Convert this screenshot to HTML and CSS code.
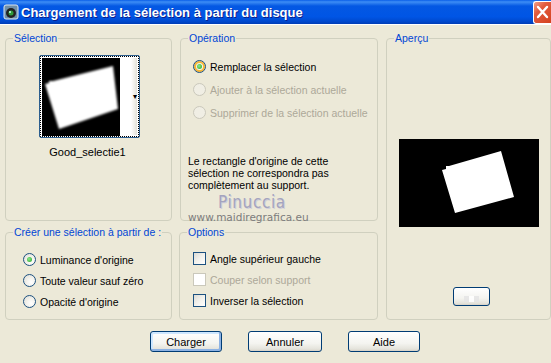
FILE: index.html
```html
<!DOCTYPE html>
<html>
<head>
<meta charset="UTF-8">
<title>Chargement de la sélection à partir du disque</title>
<link rel="stylesheet" href="styles.css">
</head>
<body>
<div class="fenetre">
	<div class="titre">
		<span class="icone">
			<svg width="16" height="16" viewBox="0 0 16 16">
				<rect x="1" y="1" width="14" height="14" rx="2" fill="#6f8fa8" stroke="#dfe8ef"/>
				<circle cx="8" cy="9" r="5" fill="#222"/>
				<circle cx="8" cy="9" r="2.5" fill="#2f9a3a"/>
				<circle cx="7" cy="8" r="1" fill="#cfe"/>
			</svg>
		</span>
		<span class="texte-titre">Chargement de la sélection à partir du disque</span>
		<span class="fermer">
			<svg width="17" height="21" viewBox="0 0 17 21">
				<path d="M4 5 L13 15 M13 5 L4 15" stroke="#fff" stroke-width="2.4" stroke-linecap="round"/>
			</svg>
		</span>
	</div>

	<div class="contenu">
		<fieldset class="groupe selection">
			<legend>Sélection</legend>
			<div class="vignette">
				<div class="vignette-image">
					<svg width="78" height="78" viewBox="0 0 78 78">
						<defs><filter id="flou"><feGaussianBlur stdDeviation="0.9"/></filter></defs>
						<rect width="78" height="78" fill="#000"/>
						<polygon points="3,26 7,25 7,23 11,23 71,8 76,51 17,71" fill="#fff" filter="url(#flou)"/>
					</svg>
				</div>
				<div class="vignette-fleche">&#9662;</div>
			</div>
			<div class="nom-fichier">Good_selectie1</div>
		</fieldset>

		<fieldset class="groupe operation">
			<legend>Opération</legend>
			<label class="choix"><span class="radio coche survol"></span>Remplacer la sélection</label>
			<label class="choix inactif"><span class="radio"></span>Ajouter à la sélection actuelle</label>
			<label class="choix inactif"><span class="radio"></span>Supprimer de la sélection actuelle</label>
			<p class="remarque">Le rectangle d'origine de cette sélection ne correspondra pas complètement au support.</p>
		</fieldset>

		<fieldset class="groupe apercu">
			<legend>Aperçu</legend>
			<div class="apercu-image">
				<svg width="140" height="88" viewBox="0 0 140 88">
					<defs><filter id="flou2"><feGaussianBlur stdDeviation="0.6"/></filter></defs>
					<rect width="140" height="88" fill="#000"/>
					<polygon points="43,31 47,30 47,27 50,27 102,12 115,58 56,74" fill="#fff" filter="url(#flou2)"/>
				</svg>
			</div>
			<button class="bouton petit"><span class="damier"></span></button>
		</fieldset>

		<fieldset class="groupe creer">
			<legend>Créer une sélection à partir de :</legend>
			<label class="choix"><span class="radio coche"></span>Luminance d'origine</label>
			<label class="choix"><span class="radio"></span>Toute valeur sauf zéro</label>
			<label class="choix"><span class="radio"></span>Opacité d'origine</label>
		</fieldset>

		<fieldset class="groupe options">
			<legend>Options</legend>
			<label class="choix"><span class="case"></span>Angle supérieur gauche</label>
			<label class="choix inactif"><span class="case"></span>Couper selon support</label>
			<label class="choix"><span class="case"></span>Inverser la sélection</label>
		</fieldset>

		<div class="filigrane">
			<div class="filigrane-nom">Pinuccia</div>
			<div class="filigrane-site">www.maidiregrafica.eu</div>
		</div>
	</div>

	<div class="boutons">
		<button class="bouton defaut">Charger</button>
		<button class="bouton">Annuler</button>
		<button class="bouton">Aide</button>
	</div>
</div>
</body>
</html>
```

FILE: styles.css
```css
body{
	margin:0;
	background-color:#ECE9D8;
	font-family:"Liberation Sans", Arial, sans-serif;
	font-size:10.5px;
	color:#000;
}
.fenetre{
	width:551px;
	height:363px;
	overflow:hidden;
	position:relative;
}

/* barre de titre facon XP */
.titre{
	height:25px;
	display:flex;
	align-items:center;
	background:linear-gradient(#0A5FE8 0%, #3D8DF5 8%, #0458E3 25%, #0055E5 70%, #0048CC 90%, #003DB5 100%);
	border-bottom:1px solid #fff;
	box-sizing:border-box;
	color:#fff;
}
.icone{
	width:16px;
	height:16px;
	margin-left:3px;
	margin-right:2px;
	display:flex;
}
.texte-titre{
	font-weight:bold;
	font-size:13px;
	text-shadow:1px 1px #0A1E8C;
	flex:1;
}
.fermer{
	width:17px;
	height:21px;
	background:linear-gradient(135deg, #F0A08A 0%, #E25B3E 35%, #D4421F 100%);
	border:1px solid #fff;
	border-right:none;
	border-radius:3px 0 0 3px;
	display:flex;
}

/* zone principale */
.contenu{
	position:relative;
	display:grid;
	grid-template-columns:167px 198px 165px;
	grid-template-rows:189px 94px;
	column-gap:8px;
	row-gap:5px;
	padding:7px 0 0 5px;
}
.groupe{
	margin:0;
	border:1px solid #D0D0BF;
	border-radius:4px;
	padding:0;
	min-width:0;
	position:relative;
}
.groupe legend{
	color:#0046D5;
	padding:0 1px;
	margin-left:7px;
	line-height:13px;
}
.selection{ grid-column:1; grid-row:1; }
.operation{ grid-column:2; grid-row:1; }
.apercu{ grid-column:3; grid-row:1 / span 2; }
.creer{ grid-column:1; grid-row:2; }
.options{ grid-column:2; grid-row:2; margin-left:-1px; }

/* vignette de selection */
.vignette{
	width:101px;
	height:83px;
	margin:10px 0 0 33px;
	border:1px solid #2C5E8E;
	border-radius:2px;
	box-sizing:border-box;
	padding:2px;
	display:flex;
	background:#fff;
	outline:1px dotted #000;
	outline-offset:-2px;
}
.vignette-image{
	width:78px;
	height:78px;
	display:flex;
}
.vignette-fleche{
	width:17px;
	background:linear-gradient(90deg, #fff 0%, #fff 65%, #E4E2D8 100%);
	font-size:8px;
	line-height:8px;
	text-align:right;
	padding-top:35px;
	box-sizing:border-box;
}
.nom-fichier{
	text-align:center;
	margin-top:8px;
	padding-right:2px;
	font-size:11px;
}

/* boutons radio et cases */
.choix{
	display:flex;
	align-items:center;
	height:13px;
	gap:4px;
}
.operation .choix{ margin-left:12px; margin-bottom:10px; }
.operation .choix:first-of-type{ margin-top:15px; }
.creer .choix{ margin-left:17px; margin-bottom:8px; }
.creer .choix:first-of-type{ margin-top:14px; }
.options .choix{ margin-left:13px; margin-bottom:8px; }
.options .choix:first-of-type{ margin-top:13px; }

.inactif{ color:#ACA899; }
.radio{
	width:13px;
	height:13px;
	border-radius:50%;
	border:1px solid #1C5180;
	box-sizing:border-box;
	background:radial-gradient(circle at 65% 65%, #fff 0%, #F4F3EE 40%, #DCDBD2 100%);
	display:inline-block;
	position:relative;
	flex:none;
}
.radio.coche::after{
	content:"";
	position:absolute;
	left:3px;
	top:3px;
	width:5px;
	height:5px;
	border-radius:50%;
	background:radial-gradient(circle at 40% 40%, #8CEB8C, #21A121);
}
.radio.survol{
	box-shadow:inset 0 0 0 2px #F8B636;
}
.inactif .radio{
	border-color:#CAC8BB;
	background:#F0EEE4;
}
.case{
	width:13px;
	height:13px;
	border:1px solid #1C5180;
	box-sizing:border-box;
	background:linear-gradient(135deg, #DCDBD5 0%, #F2F1EC 50%, #fff 100%);
	display:inline-block;
	flex:none;
}
.inactif .case{
	border-color:#CAC8BB;
	background:#fff;
}

.remarque{
	margin:36px 0 0 7px;
	line-height:12px;
	width:170px;
}

/* apercu */
.apercu-image{
	width:140px;
	height:88px;
	margin:94px 0 0 12px;
	display:flex;
}
.bouton{
	font-family:"Liberation Sans", Arial, sans-serif;
	font-size:11px;
	color:#000;
	border:1px solid #003C74;
	border-radius:3px;
	background:linear-gradient(#FFFFFF 0%, #F4F4F0 60%, #E4E3DB 90%, #D6D0C5 100%);
	padding:0;
	height:21px;
}
.bouton.petit{
	display:block;
	width:37px;
	height:19px;
	margin:60px 0 0 66px;
	position:relative;
}
.damier{
	display:block;
	width:15px;
	height:6px;
	margin:4px auto 0;
	background:
		linear-gradient(90deg, transparent 0 5px, #fff 5px 10px, transparent 10px),
		linear-gradient(90deg, #E6E6E6 0 5px, transparent 5px 10px, #E6E6E6 10px);
	opacity:0.9;
}

/* filigrane */
.filigrane{
	position:absolute;
	left:188px;
	top:168px;
	pointer-events:none;
}
.filigrane-nom{
	font-family:"DejaVu Sans Condensed", "DejaVu Sans", sans-serif;
	font-size:17px;
	letter-spacing:0.6px;
	color:#A4A4BE;
	text-shadow:1px 1px #D0CFDA;
	line-height:18px;
	padding-left:30px;
}
.filigrane-site{
	font-family:"DejaVu Sans", sans-serif;
	font-size:10.5px;
	color:#7C7C7C;
	line-height:13px;
}

/* boutons du bas */
.boutons{
	display:flex;
	gap:26px;
	padding:11px 0 0 150px;
}
.boutons .bouton:nth-child(1){ width:72px; }
.boutons .bouton:nth-child(2){ width:74px; }
.boutons .bouton:nth-child(3){ width:72px; }
.bouton.defaut{
	box-shadow:inset -1px -1px 0 1px #8DB2E3, inset 1px 1px 0 1px #CEE7FF;
}
```
